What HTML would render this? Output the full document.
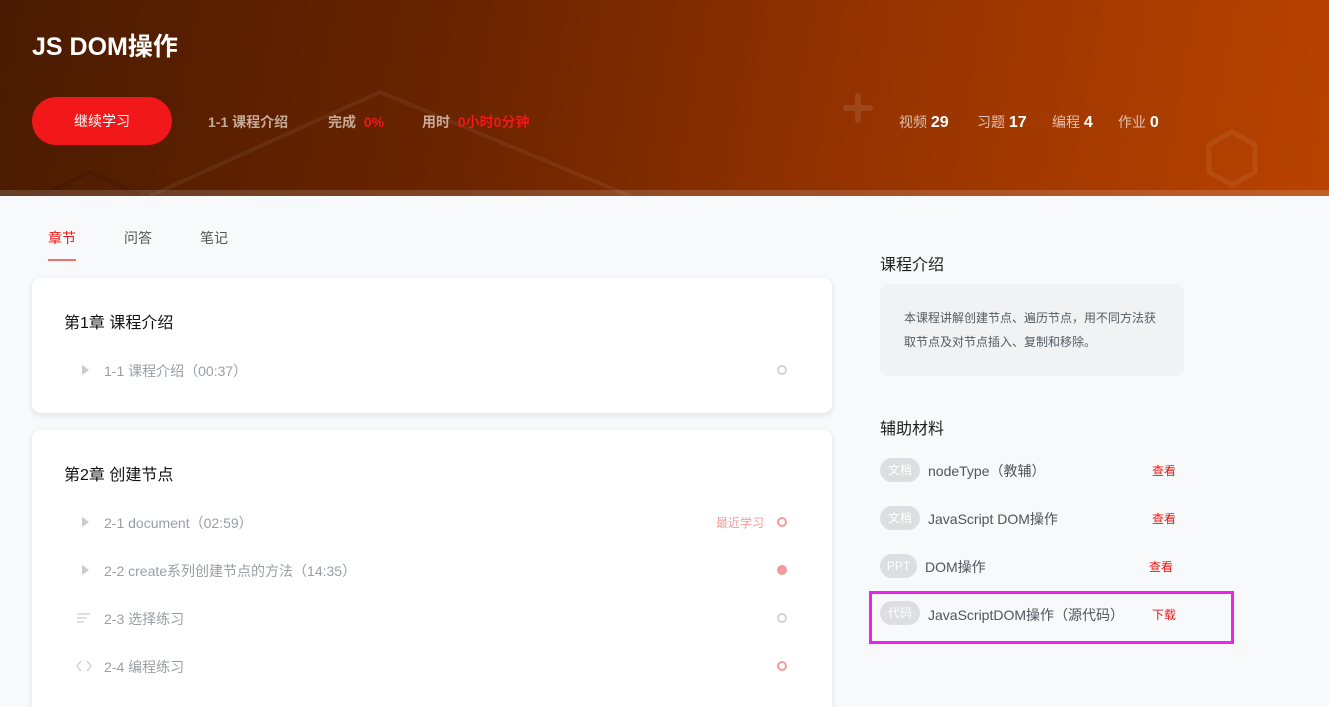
<!DOCTYPE html>
<html style="overflow:hidden;height:707px"><head><meta charset="utf-8"><style>
*{margin:0;padding:0;box-sizing:border-box}
body{width:1329px;height:707px;overflow:hidden;background:#f8f9fb;font-family:"Liberation Sans","Noto Sans CJK SC",sans-serif;position:relative}
.a{position:absolute;white-space:nowrap}
#hd{position:absolute;left:0;top:0;width:1329px;height:196px;background:linear-gradient(100deg,#4a1b00 0%,#6a2400 35%,#953300 65%,#b94300 100%);overflow:hidden}
#strip{position:absolute;left:0;top:190px;width:1329px;height:6px;background:rgba(255,255,255,0.15)}
.card{position:absolute;left:32px;width:800px;background:#fff;border-radius:8px;box-shadow:0 2px 6px rgba(0,0,0,0.1)}
.li{font-size:14px;color:#9a9ea3}
.tri{position:absolute;width:0;height:0;border-left:7px solid #c9ccd1;border-top:5px solid transparent;border-bottom:5px solid transparent}
.dot{position:absolute;width:10px;height:10px;border-radius:50%;border:2px solid #d0d3d8}
.tag{position:absolute;height:24px;border-radius:12px;background:#dcdee2;color:#fff;font-size:12px;line-height:24px;text-align:center}
.mt{font-size:14px;color:#4d555d}
.rd{font-size:12px;color:#f01414}
</style></head><body>
<div id="hd">
<svg class="a" style="left:0;top:0" width="1329" height="196">
<polyline points="150,196 380,92 630,196" fill="none" stroke="rgba(255,255,255,0.06)" stroke-width="4"/>
<polyline points="40,196 90,172 140,196" fill="none" stroke="rgba(0,0,0,0.1)" stroke-width="4"/>
<path d="M858 96v24M846 108h24" stroke="rgba(255,255,255,0.1)" stroke-width="6" stroke-linecap="round"/>
<polygon points="1232,132 1255,145 1255,172 1232,185 1209,172 1209,145" fill="none" stroke="rgba(255,255,255,0.07)" stroke-width="5"/>
</svg>
<div id="strip"></div>
<div class="a" style="left:32px;top:27px;font-size:25px;font-weight:bold;color:#fff">JS DOM操作</div>
<div class="a" style="left:32px;top:97px;width:140px;height:48px;border-radius:24px;background:#f21718;color:#fff;font-size:14px;line-height:48px;text-align:center">继续学习</div>
<div class="a" style="left:208px;top:112px;font-size:14px;font-weight:bold;color:#c7a998">1-1 课程介绍</div>
<div class="a" style="left:328px;top:112px;font-size:14px;font-weight:bold;color:#c7a998">完成 <span style="color:#f21718;margin-left:4px">0%</span></div>
<div class="a" style="left:422px;top:112px;font-size:14px;font-weight:bold;color:#c7a998">用时 <span style="color:#f21718;margin-left:4px">0小时0分钟</span></div>
<div class="a" style="left:899px;top:112px;font-size:14px;color:#e0c0b0">视频 <b style="color:#fff;font-size:16px">29</b></div>
<div class="a" style="left:977px;top:112px;font-size:14px;color:#e0c0b0">习题 <b style="color:#fff;font-size:16px">17</b></div>
<div class="a" style="left:1052px;top:112px;font-size:14px;color:#e0c0b0">编程 <b style="color:#fff;font-size:16px">4</b></div>
<div class="a" style="left:1118px;top:112px;font-size:14px;color:#e0c0b0">作业 <b style="color:#fff;font-size:16px">0</b></div>
</div>

<div class="a" style="left:48px;top:228px;font-size:14px;color:#f01414">章节</div>
<div class="a" style="left:48px;top:259px;width:28px;height:2px;background:#f07070"></div>
<div class="a" style="left:124px;top:228px;font-size:14px;color:#555">问答</div>
<div class="a" style="left:200px;top:228px;font-size:14px;color:#555">笔记</div>

<div class="card" style="top:278px;height:135px">
<div class="a" style="left:32px;top:31px;font-size:16px;color:#111">第1章 课程介绍</div>
<div class="tri" style="left:50px;top:87px"></div>
<div class="a li" style="left:72px;top:83px">1-1 课程介绍（00:37）</div>
<div class="dot" style="left:745px;top:87px"></div>
</div>

<div class="card" style="top:430px;height:277px;border-radius:8px 8px 0 0">
<div class="a" style="left:32px;top:31px;font-size:16px;color:#111">第2章 创建节点</div>
<div class="tri" style="left:50px;top:87px"></div>
<div class="a li" style="left:72px;top:83px">2-1 document（02:59）</div>
<div class="a" style="left:684px;top:84px;font-size:12px;color:#f59a9a">最近学习</div>
<div class="dot" style="left:745px;top:87px;border-color:#f39a9a"></div>
<div class="tri" style="left:50px;top:135px"></div>
<div class="a li" style="left:72px;top:131px">2-2 create系列创建节点的方法（14:35）</div>
<div class="dot" style="left:745px;top:135px;background:#f39a9a;border-color:#f39a9a"></div>
<svg class="a" style="left:44px;top:182px" width="16" height="12"><path d="M1 2h13M1 6h10M1 10h7" stroke="#c9ccd1" stroke-width="1.2"/></svg>
<div class="a li" style="left:72px;top:179px">2-3 选择练习</div>
<div class="dot" style="left:745px;top:183px"></div>
<svg class="a" style="left:44px;top:230px" width="16" height="12"><path d="M5 1L1 6l4 5M11 1l4 5-4 5" fill="none" stroke="#c9ccd1" stroke-width="1.2"/></svg>
<div class="a li" style="left:72px;top:227px">2-4 编程练习</div>
<div class="dot" style="left:745px;top:231px;border-color:#f39a9a"></div>
</div>

<div class="a" style="left:880px;top:251px;font-size:16px;color:#1c1f21">课程介绍</div>
<div class="a" style="left:880px;top:284px;width:304px;height:92px;background:#f0f2f4;border-radius:8px"></div>
<div class="a" style="left:904px;top:306px;font-size:12px;color:#545c63;line-height:24px;white-space:normal;width:260px">本课程讲解创建节点、遍历节点，用不同方法获取节点及对节点插入、复制和移除。</div>
<div class="a" style="left:880px;top:415px;font-size:16px;color:#1c1f21">辅助材料</div>

<div class="tag" style="left:880px;top:458px;width:40px">文档</div>
<div class="a mt" style="left:928px;top:461px">nodeType（教辅）</div>
<div class="a rd" style="left:1152px;top:462px">查看</div>
<div class="tag" style="left:880px;top:506px;width:40px">文档</div>
<div class="a mt" style="left:928px;top:509px">JavaScript DOM操作</div>
<div class="a rd" style="left:1152px;top:510px">查看</div>
<div class="tag" style="left:880px;top:554px;width:37px">PPT</div>
<div class="a mt" style="left:925px;top:557px">DOM操作</div>
<div class="a rd" style="left:1149px;top:558px">查看</div>
<div class="a" style="left:869px;top:591px;width:365px;height:53px;border:3px solid #ee22ee"></div>
<div class="tag" style="left:880px;top:601px;width:40px">代码</div>
<div class="a mt" style="left:928px;top:605px">JavaScriptDOM操作（源代码）</div>
<div class="a rd" style="left:1152px;top:606px">下载</div>
</body></html>
